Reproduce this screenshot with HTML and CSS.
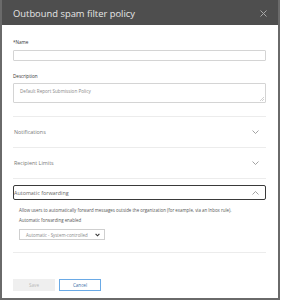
FILE: index.html
```html
<!DOCTYPE html>
<html>
<head>
<meta charset="utf-8">
<link rel="stylesheet" href="styles.css">
</head>
<body>
<div class="dialog">
  <div class="header">
    <div class="title">Outbound spam filter policy</div>
    <svg class="close" width="7" height="7" viewBox="0 0 7 7"><path d="M0.5 0.5L6.5 6.5M6.5 0.5L0.5 6.5" stroke="#a8a8a8" stroke-width="1"/></svg>
  </div>
  <div class="content">
    <div class="label name-label">*Name</div>
    <div class="input"></div>
    <div class="label desc-label">Description</div>
    <div class="textarea">Default Report Submission Policy
      <svg class="grip" width="4" height="4" viewBox="0 0 4 4"><path d="M0 4L4 0M2 4L4 2" stroke="#b0b0b0" stroke-width="0.6"/></svg>
    </div>
    <div class="divider first"></div>
    <div class="section">
      <span>Notifications</span>
      <svg class="chev" width="7" height="4" viewBox="0 0 7 4"><path d="M0.5 0.5L3.5 3.5L6.5 0.5" fill="none" stroke="#8a8a8a" stroke-width="0.8"/></svg>
    </div>
    <div class="divider"></div>
    <div class="section">
      <span>Recipient Limits</span>
      <svg class="chev" width="7" height="4" viewBox="0 0 7 4"><path d="M0.5 0.5L3.5 3.5L6.5 0.5" fill="none" stroke="#8a8a8a" stroke-width="0.8"/></svg>
    </div>
    <div class="divider"></div>
    <div class="section open">
      <span>Automatic forwarding</span>
      <svg class="chev" width="7" height="4" viewBox="0 0 7 4"><path d="M0.5 3.5L3.5 0.5L6.5 3.5" fill="none" stroke="#8a8a8a" stroke-width="0.8"/></svg>
    </div>
    <div class="panel">
      <div class="desc">Allow users to automatically forward messages outside the organization (for example, via an Inbox rule).</div>
      <div class="sublabel">Automatic forwarding enabled</div>
      <div class="select">
        <span>Automatic - System-controlled</span>
        <svg width="5" height="4" viewBox="0 0 5 4"><path d="M0.6 0.8L2.5 2.8L4.4 0.8" fill="none" stroke="#333" stroke-width="1.1"/></svg>
      </div>
    </div>
    <div class="divider last"></div>
    <div class="buttons">
      <div class="btn save">Save</div>
      <div class="btn cancel">Cancel</div>
    </div>
  </div>
</div>
</body>
</html>
```

FILE: styles.css
```css
* { box-sizing: border-box; }
html, body { margin: 0; padding: 0; background: #ffffff; }
body { font-family: "Open Sans", "Noto Sans", sans-serif; }

.dialog {
  width: 280px;
  height: 300px;
  border-left: 2px solid #6a6a6a;
  border-right: 2px solid #6a6a6a;
  border-bottom: 2px solid #6a6a6a;
  background: #fff;
  display: flex;
  flex-direction: column;
}

.header {
  height: 25px;
  background: #4e4e4e;
  display: flex;
  align-items: center;
  justify-content: space-between;
  padding: 0 11px 0 11px;
}
.title {
  color: #e6e6e6;
  font-size: 9.4px;
  line-height: 12px;
  margin-top: 2px;
}
.close { margin-top: 2px; margin-right: 0px; }

.content {
  padding: 0 12px 0 11px;
  display: flex;
  flex-direction: column;
}

.label {
  font-size: 4.6px;
  line-height: 8px;
  color: #333;
}
.name-label { margin-top: 13px; }
.input {
  margin-top: 4px;
  height: 11px;
  border: 1px solid #d4d4d4;
  border-radius: 1px;
}
.desc-label { margin-top: 11px; }
.textarea {
  position: relative;
  margin-top: 3px;
  height: 20px;
  border: 1px solid #d4d4d4;
  border-radius: 1px;
  font-size: 4.6px;
  line-height: 8px;
  color: #888;
  padding: 3px 0 0 6px;
}
.grip { position: absolute; right: 1px; bottom: 1px; }

.divider { height: 1px; background: #ececec; }
.divider.first { margin-top: 13px; }

.section {
  height: 30px;
  display: flex;
  align-items: center;
  justify-content: space-between;
  font-size: 5.4px;
  color: #777;
  padding: 0 7px 0 1px;
}
.section.open {
  margin-top: 6px;
  height: 15px;
  border: 1px solid #3a3a3a;
  border-radius: 2px;
  color: #666;
  padding: 0 6px 0 0;
}

.panel {
  padding: 5px 0 0 6px;
  display: flex;
  flex-direction: column;
}
.desc {
  font-size: 4.4px;
  line-height: 10px;
  color: #555;
}
.sublabel {
  font-size: 4.4px;
  line-height: 10px;
  color: #555;
}
.select {
  margin-top: 4px;
  width: 86px;
  height: 11px;
  border: 1px solid #cfcfcf;
  display: flex;
  align-items: center;
  justify-content: space-between;
  padding: 0 4px 0 6px;
  font-size: 4.4px;
  color: #888;
}

.divider.last { margin-top: 12px; }

.buttons {
  margin-top: 26px;
  display: flex;
  gap: 4px;
}
.btn {
  height: 12px;
  font-size: 4.6px;
  display: flex;
  align-items: center;
  justify-content: center;
}
.save {
  width: 42px;
  background: #efefef;
  color: #b8b8b8;
}
.cancel {
  width: 42px;
  border: 1px solid #6aaae6;
  color: #3a6ea8;
  background: #fff;
}
```
